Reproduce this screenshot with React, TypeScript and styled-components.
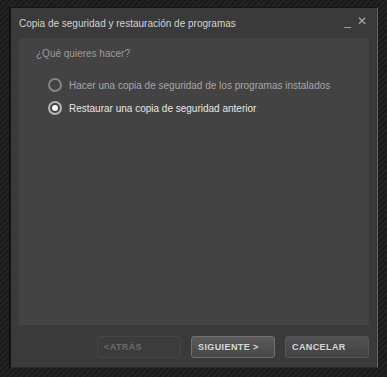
import React, { FC, useState } from "react";
import styled, { createGlobalStyle } from "styled-components";

const GlobalStyle = createGlobalStyle`
  html, body {
    margin: 0;
    padding: 0;
    height: 100%;
  }

  body {
    background-color: #1f1f1f;
    background-image: repeating-linear-gradient(
      135deg,
      #232323 0px,
      #232323 2px,
      #1a1a1a 2px,
      #1a1a1a 4px
    );
    font-family: "Liberation Sans", Arial, sans-serif;
  }
`;

const Page = styled.div`
  padding: 7px 10px 0 10px;
`;

const Window = styled.div`
  box-sizing: border-box;
  display: flex;
  flex-direction: column;
  width: 368px;
  height: 361px;
  background: #3a3a3a;
  border: 1px solid #151515;
  border-right-color: #59616a;
  border-bottom-color: #2a2d30;
  box-shadow: -1px 0 0 #0e0e0e;
`;

const TitleBar = styled.div`
  align-items: center;
  display: flex;
  height: 30px;
  justify-content: space-between;
  padding: 0 10px 0 8px;
`;

const Title = styled.span`
  color: #d2d2d2;
  font-size: 10px;
`;

const Controls = styled.div`
  align-items: center;
  display: flex;
  gap: 6px;
  margin-top: -4px;
`;

const ControlGlyph = styled.span`
  color: #a8a8a8;
  font-size: 12px;
  line-height: 12px;
`;

const Panel = styled.div`
  background: #434343;
  display: flex;
  flex: 1;
  flex-direction: column;
  margin: 0 8px;
  padding: 10px 17px;
`;

const Question = styled.div`
  color: #9c9c9c;
  font-size: 10px;
  line-height: 12px;
`;

const Options = styled.div`
  display: flex;
  flex-direction: column;
  gap: 9px;
  margin: 18px 0 0 12px;
`;

const OptionRow = styled.label<{ $selected: boolean }>`
  align-items: center;
  color: ${(p) => (p.$selected ? "#e6e6e6" : "#a6a6a6")};
  cursor: pointer;
  display: flex;
  font-size: 10px;
  gap: 7px;
`;

const RadioRing = styled.span<{ $selected: boolean }>`
  align-items: center;
  border: 2px solid ${(p) => (p.$selected ? "#b4b4b4" : "#858585")};
  border-radius: 50%;
  box-sizing: border-box;
  display: flex;
  height: 14px;
  justify-content: center;
  width: 14px;
`;

const RadioDot = styled.span`
  background: #f4f4f4;
  border-radius: 50%;
  height: 6px;
  width: 6px;
`;

const Footer = styled.div`
  display: flex;
  gap: 10px;
  justify-content: flex-end;
  padding: 11px 8px 9px 0;
`;

const Button = styled.button<{ $variant: "disabled" | "primary" | "normal" }>`
  box-sizing: border-box;
  height: 22px;
  width: 84px;
  padding: 0 0 0 6px;
  text-align: left;
  font-family: "Liberation Sans", Arial, sans-serif;
  font-size: 9px;
  font-weight: bold;
  letter-spacing: 0.4px;
  border-radius: 3px;
  cursor: pointer;
  color: ${(p) => (p.$variant === "disabled" ? "#6a6a6a" : "#d8d8d8")};
  border: 1px solid
    ${(p) =>
      p.$variant === "primary"
        ? "#707070"
        : p.$variant === "normal"
        ? "#565656"
        : "#464646"};
  background: ${(p) =>
    p.$variant === "disabled"
      ? "#3c3c3c"
      : p.$variant === "primary"
      ? "linear-gradient(#5c5c5c, #474747)"
      : "linear-gradient(#525252, #434343)"};
`;

const options = [
  "Hacer una copia de seguridad de los programas instalados",
  "Restaurar una copia de seguridad anterior",
];

const App: FC = () => {
  const [selected, setSelected] = useState(1);

  return (
    <>
      <GlobalStyle />
      <Page>
        <Window>
          <TitleBar>
            <Title>Copia de seguridad y restauración de programas</Title>
            <Controls>
              <ControlGlyph>_</ControlGlyph>
              <ControlGlyph>✕</ControlGlyph>
            </Controls>
          </TitleBar>
          <Panel>
            <Question>¿Qué quieres hacer?</Question>
            <Options>
              {options.map((label, i) => (
                <OptionRow
                  key={label}
                  $selected={selected === i}
                  onClick={() => setSelected(i)}
                >
                  <RadioRing $selected={selected === i}>
                    {selected === i && <RadioDot />}
                  </RadioRing>
                  {label}
                </OptionRow>
              ))}
            </Options>
          </Panel>
          <Footer>
            <Button $variant="disabled">&lt;ATRÁS</Button>
            <Button $variant="primary">SIGUIENTE &gt;</Button>
            <Button $variant="normal">CANCELAR</Button>
          </Footer>
        </Window>
      </Page>
    </>
  );
};

export default App;
